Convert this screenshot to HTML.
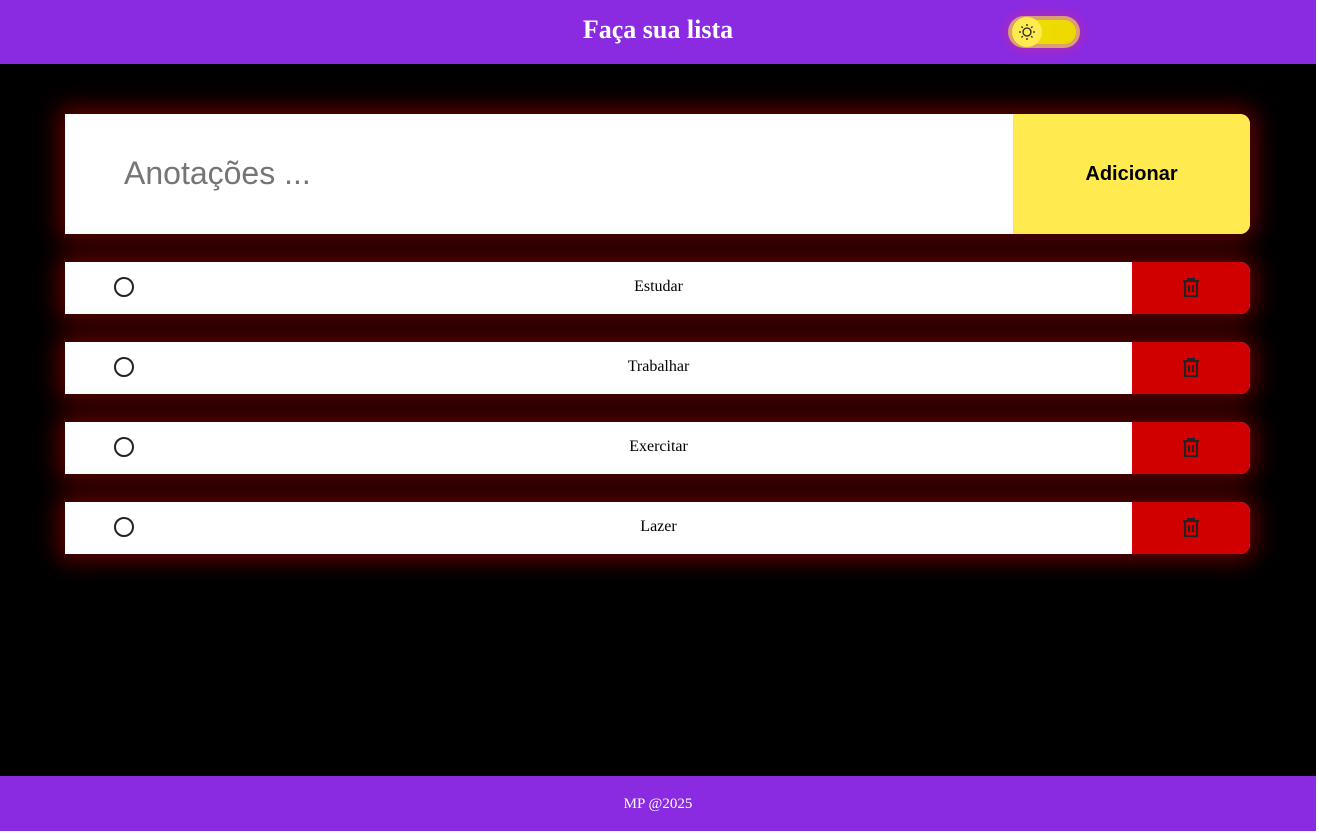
<!DOCTYPE html>
<html><head><meta charset="utf-8"><style>
*{margin:0;padding:0;box-sizing:border-box}
html,body{width:1319px;height:831px;overflow:hidden;background:#fff}
#wrap{position:absolute;left:0;top:0;width:1316px;height:831px;background:#000}
header{position:absolute;top:0;left:0;width:1316px;height:64px;background:#8a2be2}
header h1{position:absolute;left:0;width:1316px;text-align:center;top:15px;font:bold 26px "Liberation Serif",serif;color:#fff}
.tog{position:absolute;left:1008px;top:16px;width:72px;height:32px;border-radius:16px;background:#d9a070;box-shadow:0 0 12px rgba(230,40,120,.6)}
.tog .tr{position:absolute;left:4px;top:4px;width:64px;height:24px;border-radius:12px;background:linear-gradient(90deg,#f5a000,#eedc00 40%,#eed800)}
.tog .kn{position:absolute;left:4px;top:1px;width:30px;height:30px;border-radius:50%;background:#ffeb50}
.box{position:absolute;left:65px;width:1185px;background:#fff;box-shadow:0 0 24px 6px rgba(200,0,0,.5);border-radius:0 10px 10px 0}
.in{top:114px;height:120px}
.in span{position:absolute;left:59px;top:41px;font:32px "Liberation Sans",sans-serif;color:#757575}
.in .btn{position:absolute;right:0;top:0;width:237px;height:120px;background:#ffeb50;border-radius:0 10px 10px 0;font:bold 20px "Liberation Sans",sans-serif;text-align:center;line-height:120px}
.it{height:52px}
.it .c{position:absolute;left:49px;top:15px;width:20px;height:20px;border:2px solid #222;border-radius:50%}
.it .t{position:absolute;left:1px;width:1185px;text-align:center;top:16px;font:16px "Liberation Serif",serif}
.it .d{position:absolute;right:0;top:0;width:118px;height:52px;background:#d10000;border-radius:0 10px 10px 0}
.it svg{position:absolute;left:50px;top:15px}
footer{position:absolute;left:0;top:776px;width:1316px;height:55px;background:#8a2be2;color:#fff;text-align:center;font:15px "Liberation Serif",serif;line-height:57px}
</style></head><body><div id="wrap">
<header><h1>Faça sua lista</h1>
<div class="tog"><div class="tr"></div><div class="kn"><svg width="30" height="30" viewBox="0 0 30 30" fill="none" stroke="#222" stroke-width="1.3"><circle cx="15" cy="15" r="4"/><path d="M15 7v2M15 21v2M7 15h2M21 15h2M9.5 9.5l1.3 1.3M19.2 19.2l1.3 1.3M9.5 20.5l1.3-1.3M19.2 10.8l1.3-1.3"/></svg></div></div>
</header>
<div class="box in"><span>Anotações ...</span><div class="btn">Adicionar</div></div>
<div class="box it" style="top:262px"><div class="c"></div><div class="t">Estudar</div><div class="d"><svg width="18" height="20" viewBox="0 0 18 20" fill="none" stroke="#222" stroke-width="2"><path d="M1 4h16M6 4V2h6v2M3 4v15h12V4M7 8v7M11 8v7"/></svg></div></div>
<div class="box it" style="top:342px"><div class="c"></div><div class="t">Trabalhar</div><div class="d"><svg width="18" height="20" viewBox="0 0 18 20" fill="none" stroke="#222" stroke-width="2"><path d="M1 4h16M6 4V2h6v2M3 4v15h12V4M7 8v7M11 8v7"/></svg></div></div>
<div class="box it" style="top:422px"><div class="c"></div><div class="t">Exercitar</div><div class="d"><svg width="18" height="20" viewBox="0 0 18 20" fill="none" stroke="#222" stroke-width="2"><path d="M1 4h16M6 4V2h6v2M3 4v15h12V4M7 8v7M11 8v7"/></svg></div></div>
<div class="box it" style="top:502px"><div class="c"></div><div class="t">Lazer</div><div class="d"><svg width="18" height="20" viewBox="0 0 18 20" fill="none" stroke="#222" stroke-width="2"><path d="M1 4h16M6 4V2h6v2M3 4v15h12V4M7 8v7M11 8v7"/></svg></div></div>
<footer>MP @2025</footer>
</div></body></html>
